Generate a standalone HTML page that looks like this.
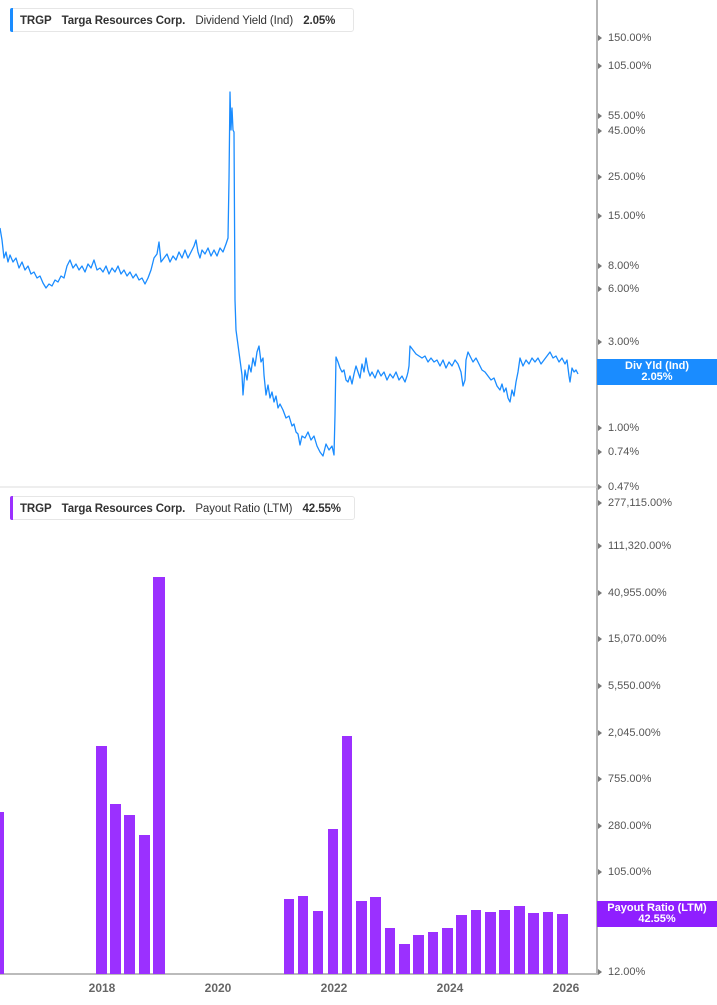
<!DOCTYPE html>
<html><head><meta charset="utf-8"><style>
html,body{margin:0;padding:0;background:#fff;width:717px;height:1005px;overflow:hidden;font-family:"Liberation Sans",sans-serif}
.leg{position:absolute;left:10px;height:24px;background:#fff;border:1px solid #e6e6e6;border-radius:3px;font-size:11.5px;font-weight:bold;color:#333;line-height:24px;padding-left:9px;white-space:nowrap;box-sizing:border-box;letter-spacing:-0.1px}
.leg i{position:absolute;left:-1px;top:-1px;bottom:-1px;width:3px;border-radius:2px 0 0 2px}
.leg span{margin-right:7px}
.ax{position:absolute;left:608px;font-size:11px;color:#555;line-height:12px}
.yr{position:absolute;top:981px;font-size:12px;font-weight:bold;color:#666;width:40px;text-align:center}
.tag{position:absolute;left:597px;width:120px;color:#fff;font-size:11px;font-weight:bold;text-align:center;line-height:11px;padding-top:2px;box-sizing:border-box}
</style></head><body>
<svg width="717" height="1005" style="position:absolute;left:0;top:0">
<line x1="597" y1="0" x2="597" y2="975" stroke="#b5b5b5" stroke-width="2"/>
<line x1="0" y1="487" x2="597" y2="487" stroke="#ddd" stroke-width="1"/>
<line x1="0" y1="974" x2="597" y2="974" stroke="#bbb" stroke-width="2"/>
<g fill="#777">
<polygon points="598,35 602,38 598,41"/><polygon points="598,63 602,66 598,69"/><polygon points="598,113 602,116 598,119"/><polygon points="598,128 602,131 598,134"/><polygon points="598,174 602,177 598,180"/><polygon points="598,213 602,216 598,219"/><polygon points="598,263 602,266 598,269"/><polygon points="598,286 602,289 598,292"/><polygon points="598,339 602,342 598,345"/><polygon points="598,425 602,428 598,431"/><polygon points="598,449 602,452 598,455"/><polygon points="598,484 602,487 598,490"/><polygon points="598,500 602,503 598,506"/><polygon points="598,543 602,546 598,549"/><polygon points="598,590 602,593 598,596"/><polygon points="598,636 602,639 598,642"/><polygon points="598,683 602,686 598,689"/><polygon points="598,730 602,733 598,736"/><polygon points="598,776 602,779 598,782"/><polygon points="598,823 602,826 598,829"/><polygon points="598,869 602,872 598,875"/><polygon points="598,969 602,972 598,975"/>
</g>
<polyline fill="none" stroke="#1a8cff" stroke-width="1.3" stroke-linejoin="round" points="0,228 2,240 4,258 6,252 8,262 10,255 13,262 16,258 19,268 22,262 25,270 28,266 31,274 34,272 37,278 40,276 43,283 46,288 49,284 52,286 55,280 58,282 61,276 64,278 67,266 70,260 73,268 76,264 79,270 82,266 85,272 88,264 91,268 94,260 97,270 100,268 103,272 106,266 109,274 112,268 115,272 118,266 121,274 124,270 127,276 130,272 133,278 136,274 139,280 142,278 145,284 148,278 151,270 154,258 157,254 159,242 161,262 164,258 167,254 170,262 173,256 176,260 179,252 182,258 185,250 188,258 191,252 194,246 196,240 198,252 200,258 202,250 205,254 208,248 211,256 214,250 217,256 220,248 223,252 226,244 228,238 229,180 230,92 231,130 232,108 233,130 234,132 235,300 236,330 238,345 240,360 242,375 243,395 245,370 247,380 249,365 251,372 253,358 255,366 257,352 259,346 261,362 263,358 264,375 266,395 268,385 270,398 272,392 274,402 276,396 278,408 280,404 283,410 286,418 289,416 292,426 294,424 296,432 298,434 300,445 302,436 305,438 308,432 311,440 314,436 317,446 320,452 323,456 326,444 329,450 332,446 334,455 335,415 336,357 338,362 340,368 342,372 344,370 346,380 348,382 350,376 352,384 354,374 356,366 358,372 360,378 362,364 364,372 366,358 368,370 370,376 372,372 375,378 378,370 381,376 384,372 387,380 390,374 393,378 396,372 399,380 402,376 405,382 407,376 408,372 409,366 410,346 413,350 416,354 419,356 422,358 425,356 428,362 431,358 434,362 437,360 440,366 443,360 446,368 449,362 452,366 455,360 458,364 461,372 463,386 465,380 466,360 468,352 470,356 473,362 476,358 479,364 482,370 485,372 488,376 491,380 494,378 497,386 500,390 502,384 504,392 506,388 508,398 510,402 512,390 514,396 516,382 518,372 520,358 523,366 526,360 529,364 532,358 535,362 538,358 541,364 544,360 547,356 550,352 553,358 556,356 559,362 562,358 565,364 567,360 569,376 570,382 572,368 574,372 576,370 578,374"/>
<g fill="#9b30ff">
<rect x="0" y="812" width="4" height="162"/>
<rect x="96" y="746" width="11" height="228"/>
<rect x="110" y="804" width="11" height="170"/>
<rect x="124" y="815" width="11" height="159"/>
<rect x="139" y="835" width="11" height="139"/>
<rect x="153" y="577" width="12" height="397"/>
<rect x="284" y="899" width="10" height="75"/>
<rect x="298" y="896" width="10" height="78"/>
<rect x="313" y="911" width="10" height="63"/>
<rect x="328" y="829" width="10" height="145"/>
<rect x="342" y="736" width="10" height="238"/>
<rect x="356" y="901" width="11" height="73"/>
<rect x="370" y="897" width="11" height="77"/>
<rect x="385" y="928" width="10" height="46"/>
<rect x="399" y="944" width="11" height="30"/>
<rect x="413" y="935" width="11" height="39"/>
<rect x="428" y="932" width="10" height="42"/>
<rect x="442" y="928" width="11" height="46"/>
<rect x="456" y="915" width="11" height="59"/>
<rect x="471" y="910" width="10" height="64"/>
<rect x="485" y="912" width="11" height="62"/>
<rect x="499" y="910" width="11" height="64"/>
<rect x="514" y="906" width="11" height="68"/>
<rect x="528" y="913" width="11" height="61"/>
<rect x="543" y="912" width="10" height="62"/>
<rect x="557" y="914" width="11" height="60"/>
</g>
</svg>
<div class="leg" style="top:8px;width:344px"><i style="background:#1a8cff"></i><span>TRGP</span> <span>Targa Resources Corp.</span> <span style="font-weight:normal">Dividend Yield (Ind)</span> 2.05%</div>
<div class="leg" style="top:496px;width:345px"><i style="background:#9b30ff"></i><span>TRGP</span> <span>Targa Resources Corp.</span> <span style="font-weight:normal">Payout Ratio (LTM)</span> 42.55%</div>
<div class="ax" style="top:32px">150.00%</div><div class="ax" style="top:60px">105.00%</div><div class="ax" style="top:110px">55.00%</div><div class="ax" style="top:125px">45.00%</div><div class="ax" style="top:171px">25.00%</div><div class="ax" style="top:210px">15.00%</div><div class="ax" style="top:260px">8.00%</div><div class="ax" style="top:283px">6.00%</div><div class="ax" style="top:336px">3.00%</div><div class="ax" style="top:422px">1.00%</div><div class="ax" style="top:446px">0.74%</div><div class="ax" style="top:481px">0.47%</div>
<div class="ax" style="top:497px">277,115.00%</div><div class="ax" style="top:540px">111,320.00%</div><div class="ax" style="top:587px">40,955.00%</div><div class="ax" style="top:633px">15,070.00%</div><div class="ax" style="top:680px">5,550.00%</div><div class="ax" style="top:727px">2,045.00%</div><div class="ax" style="top:773px">755.00%</div><div class="ax" style="top:820px">280.00%</div><div class="ax" style="top:866px">105.00%</div><div class="ax" style="top:966px">12.00%</div>
<div class="tag" style="top:359px;height:26px;background:#1a8cff">Div Yld (Ind)<br>2.05%</div>
<div class="tag" style="top:901px;height:26px;background:#8f1fff">Payout Ratio (LTM)<br>42.55%</div>
<div class="yr" style="left:82px">2018</div><div class="yr" style="left:198px">2020</div><div class="yr" style="left:314px">2022</div><div class="yr" style="left:430px">2024</div><div class="yr" style="left:546px">2026</div>
</body></html>
